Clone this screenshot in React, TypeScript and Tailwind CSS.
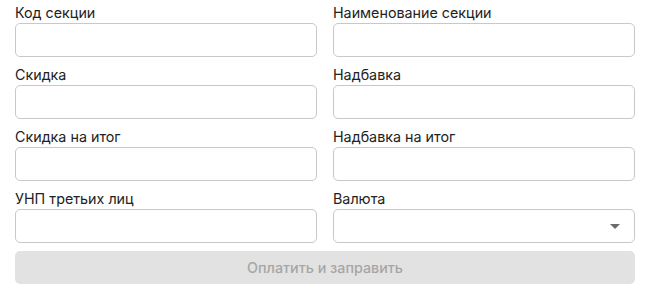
import { Fragment } from 'react'

const fields = [
  ['Код секции', 'Наименование секции'],
  ['Скидка', 'Надбавка'],
  ['Скидка на итог', 'Надбавка на итог'],
]

function Field({ label, select }: { readonly label: string; readonly select?: boolean }) {
  return (
    <label className="flex flex-col">
      <span className="h-5 text-[14.3px] leading-5 text-[#222222]">{label}</span>
      <div className="relative h-[34px] rounded-[5px] border border-[#c8c8c8] bg-white">
        {select && (
          <svg
            className="absolute right-[14px] top-[14px]"
            width="10"
            height="5"
            viewBox="0 0 10 5"
          >
            <path d="M0 0h10L5 5z" fill="#6b6b6b" />
          </svg>
        )}
      </div>
    </label>
  )
}

export default function App() {
  return (
    <main
      className="h-[299px] w-[651px] bg-white pl-[15px] pr-[16px] pt-[3px]"
      style={{ fontFamily: 'Inter, "Noto Sans", sans-serif' }}
    >
      <div className="grid grid-cols-2 gap-x-4 gap-y-2">
        {fields.map(([left, right]) => (
          <Fragment key={left}>
            <Field label={left} />
            <Field label={right} />
          </Fragment>
        ))}
        <Field label="УНП третьих лиц" />
        <Field label="Валюта" select />
      </div>
      <button
        type="button"
        disabled
        className="mt-2 h-[33px] w-full rounded-[5px] bg-[#e2e2e2] text-[14.3px] font-medium text-[#a6a6a6]"
      >
        Оплатить и заправить
      </button>
    </main>
  )
}
